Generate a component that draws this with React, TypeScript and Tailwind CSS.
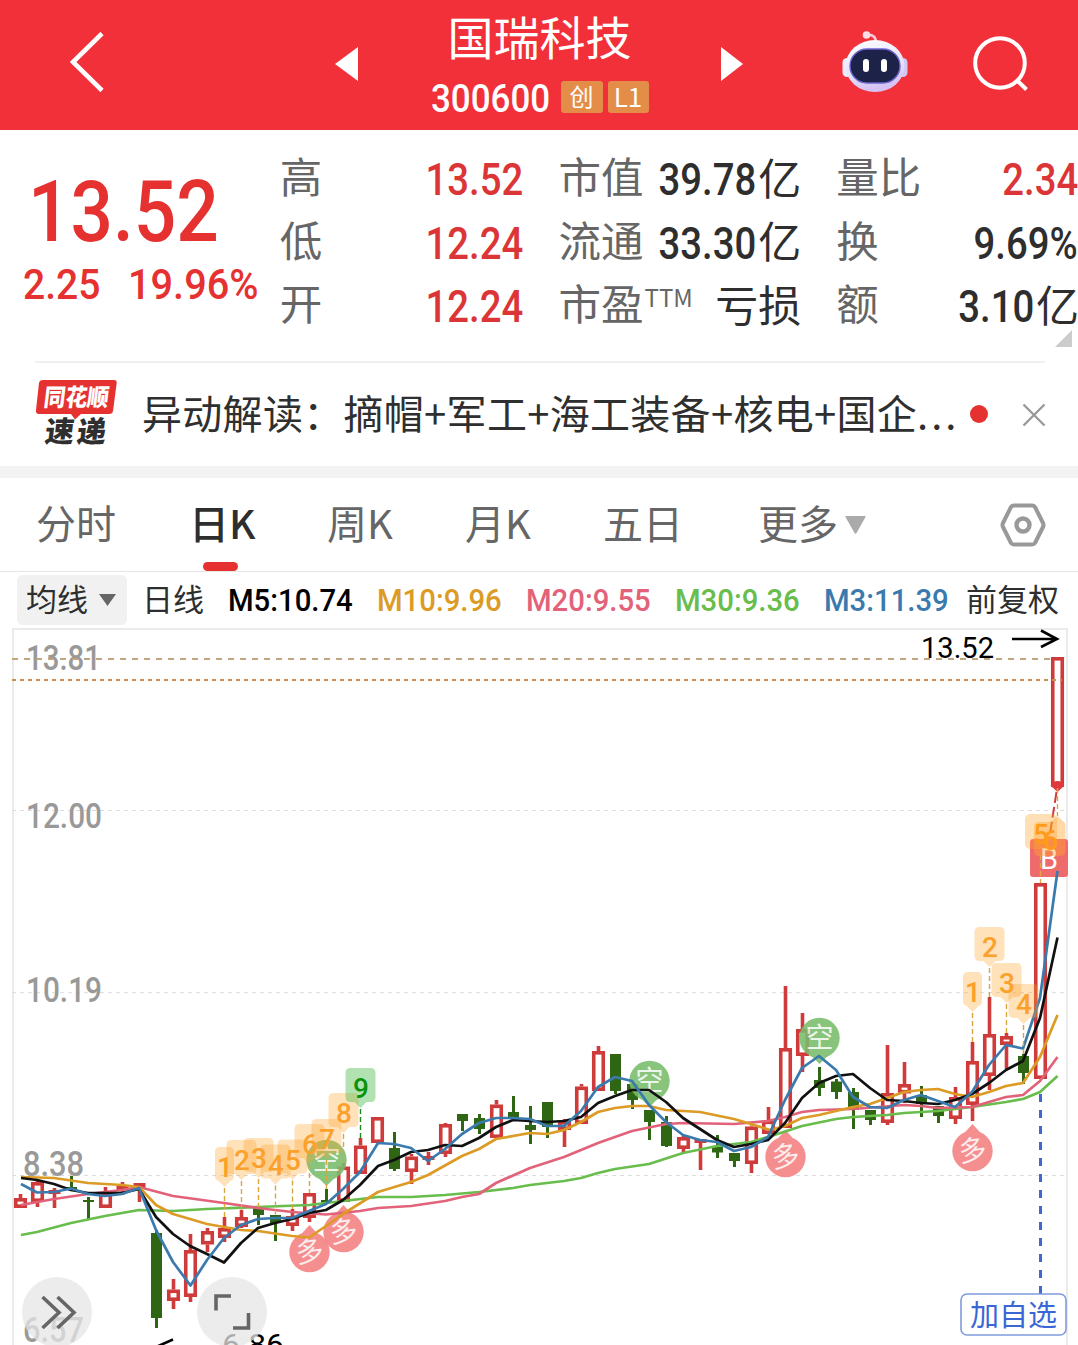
import React from "react"

const RED = "#cf3b3b"
const GREEN = "#2f6613"

type Candle = {
  high: number
  top: number
  bottom: number
  low: number
  up: boolean
}

const c = (high: number, top: number, bottom: number, low: number, up = true): Candle => ({ high, top, bottom, low, up })

// 纵坐标为画布像素
const candles: Candle[] = [
  c(1194, 1198, 1208, 1208),
  c(1181, 1182, 1202, 1207),
  c(1188, 1190, 1194, 1208),
  c(1176, 1187, 1190, 1190, false),
  c(1197, 1200, 1202, 1220, false),
  c(1187, 1192, 1208, 1208),
  c(1182, 1186, 1190, 1195),
  c(1183, 1183, 1188, 1202),
  c(1230, 1233, 1318, 1328, false),
  c(1279, 1289.5, 1301, 1309),
  c(1234, 1250, 1297, 1302),
  c(1228, 1231, 1244.5, 1252),
  c(1217, 1228, 1238, 1242),
  c(1210, 1217, 1227, 1228),
  c(1208, 1208, 1215, 1225, false),
  c(1215, 1215, 1223, 1241, false),
  c(1209, 1216, 1226, 1231),
  c(1193, 1193, 1218, 1222),
  c(1189, 1200, 1203, 1203, false),
  c(1163, 1166.5, 1202, 1202),
  c(1138, 1145.5, 1174, 1174),
  c(1117, 1117, 1143, 1143),
  c(1132, 1148, 1169, 1171, false),
  c(1154, 1156.5, 1172, 1184),
  c(1152, 1156, 1160, 1165),
  c(1123, 1124, 1154, 1157),
  c(1114, 1114, 1121, 1131, false),
  c(1114, 1118, 1129, 1134, false),
  c(1100, 1104.5, 1138, 1138),
  c(1096, 1112, 1117, 1119, false),
  c(1106, 1125, 1130, 1144, false),
  c(1102, 1102, 1127, 1138, false),
  c(1119, 1121, 1130, 1147),
  c(1084, 1086.5, 1124, 1124),
  c(1046, 1051, 1091, 1091),
  c(1054, 1054, 1091, 1094, false),
  c(1084, 1084, 1100, 1109, false),
  c(1110, 1110, 1122, 1140, false),
  c(1116, 1122, 1146, 1147, false),
  c(1135, 1137, 1149, 1152),
  c(1139, 1139, 1143, 1170),
  c(1135, 1146.5, 1152.5, 1158, false),
  c(1153, 1153, 1161, 1167, false),
  c(1125.5, 1126.5, 1164, 1173),
  c(1107, 1120.5, 1134, 1134),
  c(986, 1048, 1128, 1128),
  c(1013, 1029, 1056, 1072),
  c(1067, 1080, 1088, 1096, false),
  c(1079, 1081.5, 1092, 1099, false),
  c(1088, 1092, 1110, 1129, false),
  c(1110, 1110, 1120, 1125, false),
  c(1045, 1093, 1123, 1125),
  c(1062, 1084, 1093.5, 1103),
  c(1086, 1095, 1104, 1117, false),
  c(1106, 1106, 1116, 1123, false),
  c(1087, 1097, 1119, 1124),
  c(1042, 1061, 1105, 1121),
  c(997, 1034, 1076, 1090),
  c(1033, 1036, 1045, 1069),
  c(1054, 1056, 1073, 1084, false),
  c(883, 883, 1079, 1079),
  c(657, 657, 787, 787),
]

const averages = [
  {
    color: "#68bd4c",
    points:
      "21,1235 37,1232 71,1223 105,1216 139,1210 173,1211 207,1209 258,1207 309,1205 343,1201 378,1197 411,1197 445,1195 479,1192 513,1188 530,1185 564,1181 581,1178 598,1173 615,1169 649,1164 683,1153 717,1146 751,1142 768,1137 802,1126 836,1119 853,1117 887,1115 904,1113 938,1111 972,1107 1006,1102 1023,1099 1040,1092 1057.5,1076",
  },
  {
    color: "#e2627a",
    points:
      "21,1205 54,1199 88,1194 122,1190 139,1187 173,1196 224,1203 258,1208 292,1212 326,1214.5 360,1211 378,1208 411,1206 445,1201 462,1197 479,1194 496,1183 530,1168 564,1157 598,1143 632,1131 666,1124 683,1123 734,1124 768,1121 785,1117 802,1112 819,1110 853,1109 904,1105 921,1106 938,1108 972,1107 1006,1097 1023,1095 1040,1081 1057.5,1057",
  },
  {
    color: "#dc9b24",
    points:
      "21,1177 54,1178 88,1183 122,1185 139,1187 156,1205 173,1214 190,1219 207,1224 224,1227 241,1230 258,1231 292,1236 309,1237.5 326,1226 343,1214 378,1192 411,1182 428,1175 462,1156 479,1149 496,1139 530,1133 547,1134 564,1130 581,1122 598,1112 615,1108 632,1106 649,1106 666,1110 700,1112 734,1119 751,1124 770,1130 785,1126 802,1118 819,1115 853,1107 870,1104 904,1092 921,1090 938,1089 955,1094 972,1097 989,1092 1006,1086 1023,1083 1040,1057 1057.5,1015",
  },
  {
    color: "#111111",
    points:
      "21,1178 37,1180 54,1184 71,1190 88,1193 105,1193 122,1193 139,1189 156,1217 173,1234 190,1246 207,1254 224,1262.5 241,1243 258,1228 275,1223 292,1219 309,1213 326,1210 343,1200 360,1185 378,1166 394,1160 411,1152 428,1150 445,1145 462,1146 479,1138 496,1127 513,1120 530,1121 547,1122 564,1121 581,1117 598,1103 615,1096 632,1090 649,1090 666,1102 683,1118 700,1129 717,1140 734,1147 751,1144 768,1140 785,1123 802,1098 819,1083 836,1076 853,1074 870,1088 887,1100 904,1101 921,1103 938,1104 955,1100 972,1094 989,1083 1006,1070 1023,1061 1040,1018 1057.5,937.5",
  },
  {
    color: "#3a7aad",
    points:
      "21,1184 37,1192.5 54,1192 71,1188.5 88,1194 105,1196 122,1194 139,1188 156,1230 173,1262 190.5,1285.5 207,1260 224,1238 241,1225 258,1219 275,1218 292,1218 309,1211 326,1204 343,1189 360,1172 378,1143 394,1144 411,1148 428,1161 445,1149 462,1134 479,1123 496,1118 513,1118 530,1119 547,1126 564,1126 581,1111 598,1087 615,1077 632,1081 649,1105 666,1122 683,1135 700,1140 717,1142 734,1151 751,1147 768,1137 785,1100 802,1068 819,1056 836,1070 853,1097 870,1107 887,1108 904,1100 921,1095 938,1101 955,1107 972,1092 989,1065 1006,1045 1023,1048.5 1040,998 1057.5,871",
  },
]

// 九转序列标记
const counts = [
  { n: "1", x: 224.5, top: 1147, to: 1217 },
  { n: "2", x: 241.5, top: 1140, to: 1210 },
  { n: "3", x: 258.5, top: 1138, to: 1207 },
  { n: "4", x: 275.5, top: 1144.5, to: 1215 },
  { n: "5", x: 292.5, top: 1139.5, to: 1209 },
  { n: "6", x: 309.5, top: 1124, to: 1193 },
  { n: "7", x: 326.5, top: 1119, to: 1189 },
  { n: "8", x: 343.5, top: 1093, to: 1163 },
  { n: "9", x: 360.5, top: 1068, to: 1138 },
  { n: "1", x: 972.5, top: 972, to: 1042 },
  { n: "2", x: 989.5, top: 927, to: 997 },
  { n: "3", x: 1006.5, top: 963, to: 1033 },
  { n: "4", x: 1023.5, top: 984, to: 1054 },
]

const bubbles = [
  { label: "空", x: 326.5, y: 1160 },
  { label: "空", x: 649.5, y: 1081 },
  { label: "空", x: 819.5, y: 1038 },
  { label: "多", x: 309.5, y: 1252 },
  { label: "多", x: 343.5, y: 1232 },
  { label: "多", x: 785.5, y: 1157 },
  { label: "多", x: 972.5, y: 1151 },
]

const priceLabels = [
  { text: "13.81", x: 26, y: 670, w: 75 },
  { text: "12.00", x: 26, y: 828, w: 76 },
  { text: "10.19", x: 26, y: 1002, w: 76 },
  { text: "8.38", x: 23, y: 1176, w: 61 },
  { text: "6.57", x: 23, y: 1342, w: 61 },
]

function CandleShape({ candle, x }: { candle: Candle; x: number }) {
  const { high, top, bottom, low, up } = candle
  if (!up) {
    return (
      <g fill={GREEN}>
        <rect x={x - 1.5} y={high} width={3} height={low - high} />
        <rect x={x - 5.5} y={top} width={11} height={bottom - top} />
      </g>
    )
  }
  return (
    <g fill={RED}>
      <rect x={x - 1.8} y={high} width={3.6} height={top - high} />
      <rect x={x - 1.8} y={bottom} width={3.6} height={low - bottom} />
      {bottom - top > 6 ? (
        <rect x={x - 4.75} y={top + 1.8} width={9.5} height={bottom - top - 3.6} fill="#fff" stroke={RED} strokeWidth={3.6} />
      ) : (
        <rect x={x - 6} y={top} width={12} height={bottom - top} />
      )}
    </g>
  )
}

function CountTag({ n, x, top, to }: { n: string; x: number; top: number; to: number }) {
  const half = n === "1" ? 9.5 : 15
  const last = n === "9"
  return (
    <g>
      <line x1={x} x2={x} y1={top + 41} y2={to} stroke={last ? "#1c8a1c" : "#d9a53c"} strokeWidth={1.4} strokeDasharray="5 3" />
      <path
        d={`M${x - half + 5} ${top}H${x + half - 5}q5 0 5 5V${top + 29}q0 5 -5 5H${x + 6}L${x} ${top + 40}L${x - 6} ${top + 34}H${x - half + 5}q-5 0 -5 -5V${top + 5}q0 -5 5 -5Z`}
        fill={last ? "#55bf55" : "#ffa52e"}
        fillOpacity={last ? 0.45 : 0.33}
      />
      <text x={x + 0.5} y={top + 30} textAnchor="middle" fontSize={28} fontWeight={500} fill={last ? "#0a930a" : "#fba02a"}>
        {n}
      </text>
    </g>
  )
}

function Bubble({ label, x, y }: { label: string; x: number; y: number }) {
  const bear = label === "空"
  const tip = bear ? y + 26 : y - 27
  const base = bear ? y + 16 : y - 16
  return (
    <g opacity={0.88}>
      <g fill={bear ? "#79bd6c" : "#f48080"}>
        <circle cx={x} cy={y} r={20.2} />
        <path d={`M${x - 10} ${base}L${x} ${tip}L${x + 10} ${base}Z`} />
      </g>
      <text
        x={x}
        y={y + 9.5}
        textAnchor="middle"
        fontSize={28}
        fill="#fff"
        fillOpacity={0.85}
        transform={bear ? undefined : `rotate(-8 ${x} ${y})`}
      >
        {label}
      </text>
    </g>
  )
}

function Chart() {
  return (
    <svg
      className="block h-[718px] w-[1078px] font-['Roboto','Noto_Sans_CJK_SC',sans-serif]"
      viewBox="0 627 1078 718"
    >
      <path d="M13 1345V629H1067V1345" fill="none" stroke="#ebebeb" strokeWidth={2} />

      {[810.5, 992.7, 1175.5].map((y) => (
        <line key={y} x1={12} x2={1066} y1={y} y2={y} stroke="#dcdcdc" strokeWidth={1} strokeDasharray="4 4" />
      ))}

      <g fill="#999" fontSize={35} fontWeight={500}>
        {priceLabels.map((l) => (
          <text key={l.text} x={l.x} y={l.y} textLength={l.w} lengthAdjust="spacingAndGlyphs">
            {l.text}
          </text>
        ))}
      </g>

      <line x1={12} x2={1066} y1={659} y2={659} stroke="#bfa67c" strokeWidth={1.8} strokeDasharray="6 6" />

      {candles.map((candle, i) => (
        <CandleShape key={i} candle={candle} x={20.5 + i * 17} />
      ))}

      <line x1={12} x2={1062} y1={680} y2={680} stroke="#cc8f4f" strokeWidth={2} strokeDasharray="4 4" />

      {bubbles.map((b) => (
        <Bubble key={b.x} {...b} />
      ))}

      {/* 买入点 */}
      <path d="M1051 786a6.5 5 0 0 1 13 0L1057.5 792Z" fill="#e03a3e" />
      <line x1={1056.5} y1={792} x2={1049} y2={840} stroke="#d03b3b" strokeWidth={2} strokeDasharray="11 4" />
      <rect x={1030} y={839} width={38} height={38} rx={3} fill="#ef6b6b" />
      <text x={1049} y={868.5} textAnchor="middle" fontSize={29} fill="#fff">
        B
      </text>

      {averages.map((a) => (
        <polyline key={a.color} points={a.points} fill="none" stroke={a.color} strokeWidth={2.7} strokeLinejoin="round" />
      ))}

      {counts.map((t) => (
        <CountTag key={t.x} {...t} />
      ))}

      <rect x={1025} y={814} width={32} height={35} rx={5} fill="#ffa52e" fillOpacity={0.35} />
      <path
        d="M1039 822H1051L1057.5 816L1064 822Q1065.5 823 1065.5 827V851Q1065.5 856 1060 856H1039Q1034 856 1034 851V827Q1034 822 1039 822Z"
        fill="#ffa52e"
        fillOpacity={0.42}
      />
      <line x1={1057.5} x2={1057.5} y1={788} y2={816} stroke="#d9a53c" strokeWidth={1.4} strokeDasharray="5 3" />
      <line x1={1040.5} x2={1040.5} y1={855} y2={883} stroke="#e8a544" strokeWidth={1.4} strokeDasharray="5 3" />
      <g fill="#ff9a1a" fontSize={27} fontWeight={500} textAnchor="middle">
        <text x={1041} y={844}>5</text>
        <text x={1050.5} y={850}>6</text>
      </g>

      <g fontSize={30} fill="#000">
        <text x={921} y={658} textLength={73} lengthAdjust="spacingAndGlyphs">13.52</text>
        <text x={222} y={1355} textLength={62} lengthAdjust="spacingAndGlyphs">6.86</text>
      </g>
      <path d="M1012 639H1057M1041 630.5L1057 639L1041 647" fill="none" stroke="#000" strokeWidth={2.6} />
      <path d="M156 1347L173 1339.5" stroke="#000" strokeWidth={2.6} />

      {/* 加自选 */}
      <line x1={1040.5} x2={1040.5} y1={1094} y2={1294} stroke="#3f6ad0" strokeWidth={3} strokeDasharray="8 8" />
      <rect x={961} y={1294} width={105} height={41} rx={6} fill="#fff" stroke="#7f9cdd" strokeWidth={1.6} />
      <text x={1013.5} y={1325.5} textAnchor="middle" fontSize={29} fill="#3a66d6">
        加自选
      </text>

      {/* 浮动按钮 */}
      <g fill="#e6e6e6" fillOpacity={0.75}>
        <circle cx={57} cy={1312} r={35} />
        <circle cx={232} cy={1312} r={35} />
      </g>
      <g fill="none" stroke="#666" strokeWidth={3.6}>
        <path d="M42.5 1297L59 1312.5L42.5 1328M57.5 1297L74 1312.5L57.5 1328" />
        <path d="M216 1310.5V1296H231M248.5 1313V1328H233" />
      </g>
    </svg>
  )
}

function Robot() {
  return (
    <svg className="h-[64px] w-[66px]" viewBox="0 0 66 64">
      <defs>
        <linearGradient id="shell" x1="0" y1="0" x2="0.3" y2="1">
          <stop offset="0" stopColor="#fff" />
          <stop offset="0.65" stopColor="#e6e2f8" />
          <stop offset="1" stopColor="#d6c2f2" />
        </linearGradient>
      </defs>
      <path d="M25 5Q34 4 34 13" fill="none" stroke="#f6c9d4" strokeWidth={2.6} />
      <circle cx={24.5} cy={5} r={3.8} fill="#fbdfe4" />
      <rect x={0.5} y={28} width={9} height={19} rx={4.5} fill="#eeeafa" />
      <rect x={56.5} y={28} width={9} height={19} rx={4.5} fill="#cfc9f3" />
      <ellipse cx={33} cy={36} rx={29.5} ry={26} fill="url(#shell)" />
      <rect x={8} y={19} width={50} height={34} rx={17} fill="#1d2348" stroke="#6c63cf" strokeWidth={1.4} />
      <rect x={21} y={29} width={6} height={13} rx={3} fill="#fff" />
      <rect x={39} y={29} width={6} height={13} rx={3} fill="#fff" />
    </svg>
  )
}

function Header() {
  return (
    <header className="flex h-[130px] shrink-0 bg-[#f23039] text-white">
      <div className="flex w-[335px] items-center pl-[70px]">
        <svg className="-mt-[6px] h-[60px] w-[34px]" viewBox="0 0 34 60" fill="none" stroke="#fff" strokeWidth={4.6}>
          <path d="M32 1.5L3 30L32 58.5" />
        </svg>
      </div>
      <div className="flex w-[409px] items-center justify-between">
        <svg className="-mt-[2px] h-[34px] w-[23px]" viewBox="0 0 23 34">
          <path d="M0 17L23 0V34Z" fill="#fff" />
        </svg>
        <div className="flex h-full flex-col items-center pt-[7px]">
          <div className="text-[46px] leading-[56px]">国瑞科技</div>
          <div className="flex h-[60px] items-start pt-[3px]">
            <div className="mt-[9px] w-[120px]">
              <span className="inline-block origin-left scale-x-[0.92] font-['Roboto'] text-[38px] font-medium leading-[48px]">300600</span>
            </div>
            <span className="ml-[10px] mt-[15px] flex h-[32px] w-[42px] items-center justify-center rounded-[3px] bg-[#e48d48] pb-[3px] text-[24px]">创</span>
            <span className="ml-[5px] mt-[15px] flex h-[32px] w-[41px] items-center justify-center rounded-[3px] bg-[#e48d48] pb-[3px] text-[26px]">L1</span>
          </div>
        </div>
        <svg className="-mt-[2px] h-[34px] w-[23px]" viewBox="0 0 23 34">
          <path d="M0 0L22 17L0 34Z" fill="#fff" />
        </svg>
      </div>
      <div className="flex flex-1 items-start pl-[98px] pt-[30px]">
        <Robot />
        <svg className="ml-[64px] mt-[5px] h-[60px] w-[60px]" viewBox="0 0 60 60" fill="none" stroke="#fff" strokeWidth={4}>
          <circle cx={28} cy={28} r={24.8} />
          <path d="M44 44.5L54.5 54.5" />
        </svg>
      </div>
    </header>
  )
}

function Value({ num, unit, red }: { num?: string; unit?: string; red?: boolean }) {
  return (
    <span className={red ? "flex items-center text-[#dc3537]" : "flex items-center text-[#2e2e2e]"}>
      {num && (
        <span className="inline-block origin-right scale-x-[0.87] pt-[3px] font-['Roboto'] text-[44px] font-medium leading-[60px]">{num}</span>
      )}
      {unit && <span className="-mr-px ml-[2px] pb-[6px] text-[43px] leading-[58px]">{unit}</span>}
    </span>
  )
}

function Stat({ label, children }: { label: React.ReactNode; children: React.ReactNode }) {
  return (
    <div className="flex h-[63.5px] items-center justify-between whitespace-nowrap">
      <span className="flex pb-[7px] text-[42.5px] leading-[58px] text-[#666]">{label}</span>
      {children}
    </div>
  )
}

function Quote() {
  return (
    <section className="flex h-[231px] shrink-0 pt-[17px]">
      <div className="w-[280px] font-['Roboto'] font-medium text-[#e63131]">
        <div className="pl-[28px] pt-[20px]">
          <span className="inline-block origin-left scale-x-[0.87] text-[86px] leading-[90px]">13.52</span>
        </div>
        <div className="flex pl-[23px] pt-[2px] text-[42px] leading-[52px]">
          <span className="w-[105px]">
            <span className="inline-block origin-left scale-x-[0.93]">2.25</span>
          </span>
          <span className="inline-block origin-left scale-x-[0.945]">19.96%</span>
        </div>
      </div>
      <div className="w-[244px]">
        <Stat label="高"><Value num="13.52" red /></Stat>
        <Stat label="低"><Value num="12.24" red /></Stat>
        <Stat label="开"><Value num="12.24" red /></Stat>
      </div>
      <div className="ml-[35px] w-[242px]">
        <Stat label="市值"><Value num="39.78" unit="亿" /></Stat>
        <Stat label="流通"><Value num="33.30" unit="亿" /></Stat>
        <Stat label={<>市盈<span className="-mt-[5px] ml-[1px] text-[24px]">TTM</span></>}><Value unit="亏损" /></Stat>
      </div>
      <div className="ml-[36px] w-[242px]">
        <Stat label="量比"><Value num="2.34" red /></Stat>
        <Stat label="换"><Value num="9.69%" /></Stat>
        <Stat label="额"><Value num="3.10" unit="亿" /></Stat>
        <svg className="-mt-[8px] ml-[219px] h-[17px] w-[17px]" viewBox="0 0 17 17">
          <path d="M17 0V17H0Z" fill="#ccc" />
        </svg>
      </div>
    </section>
  )
}

function News() {
  return (
    <section className="flex h-[105px] shrink-0 items-center pl-[35px] pr-[33px]">
      <div className="flex h-full w-full items-center border-t-2 border-[#efefef]">
        <svg className="-mt-[2px] h-[70px] w-[82px] shrink-0" viewBox="0 0 82 70">
          <path d="M8 1H79Q82 1 81.7 4L78 32Q77.5 35 74 35H46L40 40.500L36 35H4Q0.5 35 1 31L4 4Q4.5 1 8 1Z" fill="#e63131" />
          <text transform="translate(8 27) skewX(-7)" textLength={65} lengthAdjust="spacingAndGlyphs" fontSize={24} fontWeight={900} fill="#fff">同花顺</text>
          <text transform="translate(9 63) skewX(-7)" fontSize={29} fontWeight={900} fill="#2f2f2f" textLength={61} lengthAdjust="spacing">速递</text>
        </svg>
        <div className="-mt-[6px] ml-[25px] w-[822px] shrink-0 whitespace-nowrap text-[40px] leading-[60px] tracking-[0.3px] text-[#2f2f2f]">
          异动解读：摘帽+军工+海工装备+核电+国企<span className="tracking-[3px]">...</span>
        </div>
        <span className="-mt-[2px] ml-[6px] h-[18px] w-[18px] shrink-0 rounded-full bg-[#e63131]" />
        <svg className="ml-[34px] h-[24px] w-[24px] shrink-0" viewBox="0 0 24 24" stroke="#999" strokeWidth={2.4}>
          <path d="M1.5 1.500L22.500 22.500M22.500 1.500L1.500 22.500" />
        </svg>
      </div>
    </section>
  )
}

function Tabs() {
  return (
    <nav className="flex h-[94px] shrink-0 items-center border-b border-[#e6e6e6] text-[40px] leading-[58px] text-[#666]">
      <div className="w-[154px] pb-[5px] pl-[36px]">分时</div>
      <div className="relative w-[137px] pb-[5px] pl-[35px] font-medium text-[#2e2e2e]">
        日K
        <span className="absolute left-[49px] top-[69px] h-[9px] w-[35px] rounded-full bg-[#e63131]" />
      </div>
      <div className="w-[137px] pb-[5px] pl-[36px]">周K</div>
      <div className="w-[140px] pb-[5px] pl-[37px]">月K</div>
      <div className="w-[154px] pb-[5px] pl-[35px]">五日</div>
      <div className="flex w-[278px] items-center pl-[36px]">
        <span className="pb-[5px]">更多</span>
        <svg className="ml-[7px] h-[18px] w-[21px]" viewBox="0 0 21 18">
          <path d="M1 0H20Q21 0 20.5 1L11.5 17Q10.5 18.5 9.5 17L0.5 1Q0 0 1 0Z" fill="#aaa" />
        </svg>
      </div>
      <svg className="h-[46px] w-[46px]" viewBox="0 0 46 46" fill="none" stroke="#999" strokeLinejoin="round">
        <path d="M14 3.5H32Q34 3.5 35 5L43 21Q44 23 43 25L35 41Q34 42.5 32 42.5H14Q12 42.5 11 41L3 25Q2 23 3 21L11 5Q12 3.5 14 3.5Z" strokeWidth={4} />
        <circle cx={23} cy={23} r={6.5} strokeWidth={4.4} />
      </svg>
    </nav>
  )
}

function Legend() {
  return (
    <div className="flex h-[55px] shrink-0 items-center whitespace-nowrap pl-[17px] text-[31px] leading-[44px] text-[#2e2e2e]">
      <div className="flex h-[50px] w-[110px] items-center rounded-[6px] bg-[#f1f1f1] pl-[9px]">
        <span className="pb-[3px]">均线</span>
        <svg className="ml-[11px] h-[12px] w-[17px]" viewBox="0 0 17 12">
          <path d="M0 0H17L8.5 12Z" fill="#666" />
        </svg>
      </div>
      <div className="ml-[15px] w-[86px] pb-[3px]">日线</div>
      <div className="flex pt-[2px] font-['Roboto'] font-medium">
        <div className="w-[149px] text-black"><span className="inline-block origin-left scale-x-[0.945]">M5:10.74</span></div>
        <div className="w-[149px] text-[#dc9b24]"><span className="inline-block origin-left scale-x-[0.945]">M10:9.96</span></div>
        <div className="w-[149px] text-[#e2627a]"><span className="inline-block origin-left scale-x-[0.945]">M20:9.55</span></div>
        <div className="w-[149px] text-[#68bd4c]"><span className="inline-block origin-left scale-x-[0.945]">M30:9.36</span></div>
        <div className="w-[142px] text-[#3a7aad]"><span className="inline-block origin-left scale-x-[0.945]">M3:11.39</span></div>
      </div>
      <div className="pb-[3px]">前复权</div>
    </div>
  )
}

export default function App() {
  return (
    <div className="flex h-[1345px] w-[1078px] flex-col overflow-hidden bg-white font-['Noto_Sans_CJK_SC',sans-serif]">
      <Header />
      <Quote />
      <News />
      <div className="h-[12px] shrink-0 bg-[#f3f3f3]" />
      <Tabs />
      <Legend />
      <Chart />
    </div>
  )
}
